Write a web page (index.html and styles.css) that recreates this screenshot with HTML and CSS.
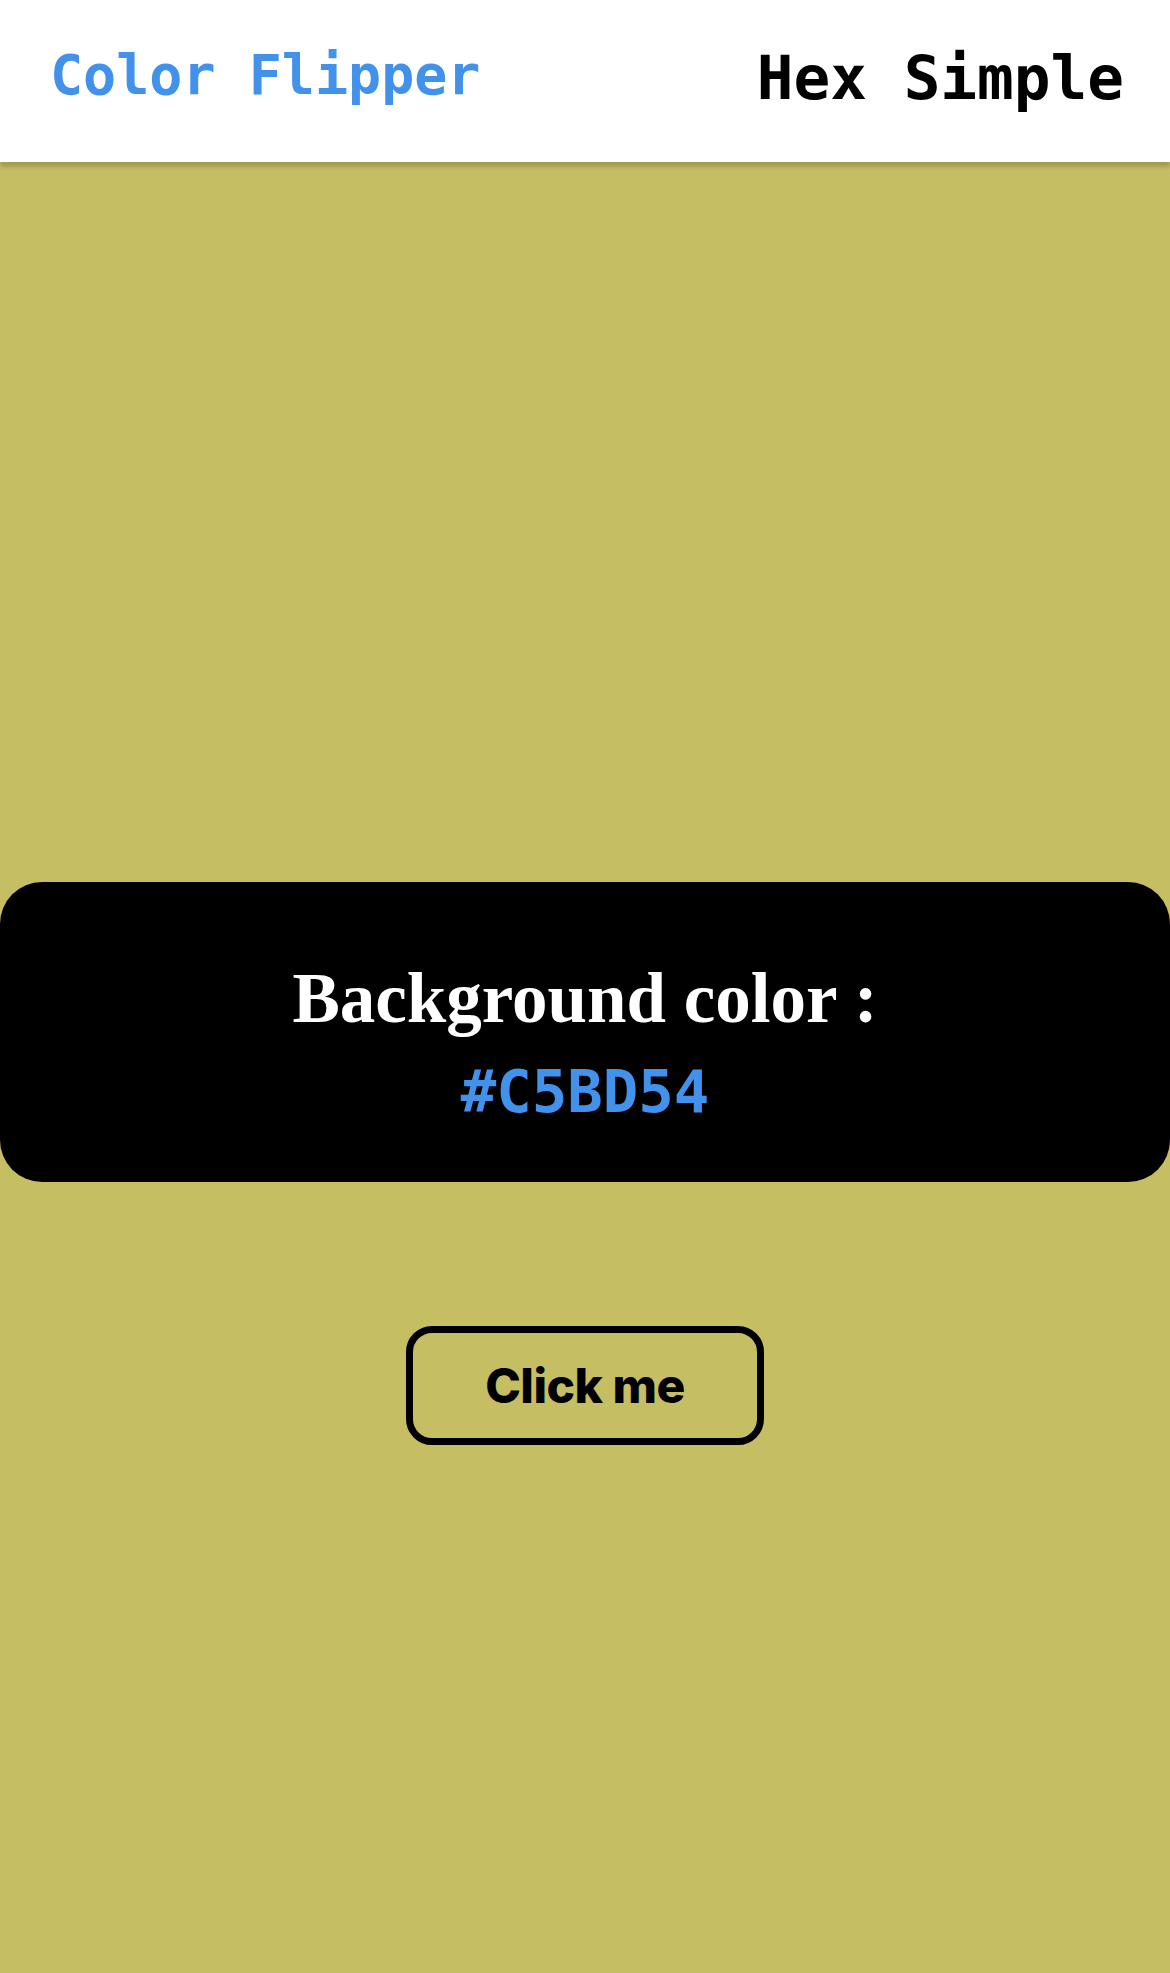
FILE: index.html
```html
<!DOCTYPE html>
<html lang="en">
<head>
<meta charset="utf-8">
<title>Color Flipper</title>
<link rel="stylesheet" href="styles.css">
</head>
<body>
<header class="topbar">
  <div class="logo">Color Flipper</div>
  <nav class="nav"><span class="nav-link">Hex</span> <span class="nav-link">Simple</span></nav>
</header>
<main class="stage">
  <section class="card">
    <h2 class="card-title">Background color :</h2>
    <div class="card-hex">#C5BD54</div>
  </section>
  <button class="flip-btn">Click me</button>
</main>
</body>
</html>
```
FILE: styles.css
```css
* { box-sizing: border-box; }
html, body { margin: 0; padding: 0; }
body {
  background: #C5BE62;
  min-height: 1973px;
  font-family: "DejaVu Sans Mono", monospace;
}
.topbar {
  position: relative;
  z-index: 1;
  height: 162px;
  background: #ffffff;
  display: flex;
  justify-content: space-between;
  align-items: flex-start;
  padding: 42px 46px 0 50px;
  box-shadow: 0 5px 4px rgba(0, 0, 0, 0.18);
}
.logo {
  font-family: "DejaVu Sans Mono", monospace;
  font-weight: bold;
  font-size: 55px;
  color: #4292ec;
  margin-top: 1px;
  white-space: pre;
}
.nav {
  font-family: "DejaVu Sans Mono", monospace;
  font-weight: bold;
  font-size: 61px;
  color: #000;
  white-space: pre;
}
.stage {
  display: flex;
  flex-direction: column;
  align-items: center;
  padding-top: 720px;
}
.card {
  width: 100%;
  background: #000;
  border-radius: 42px;
  height: 300px;
  padding: 76px 0 0;
  display: flex;
  flex-direction: column;
  align-items: center;
  gap: 19px;
}
.card-title {
  margin: 0;
  font-family: "Liberation Serif", "Times New Roman", serif;
  font-weight: bold;
  font-size: 71px;
  line-height: 80px;
  color: #fff;
}
.card-hex {
  font-family: "DejaVu Sans Mono", monospace;
  font-weight: bold;
  font-size: 59px;
  line-height: 70px;
  color: #4292ec;
}
.flip-btn {
  margin-top: 144px;
  width: 358px;
  height: 119px;
  background: transparent;
  border: 7px solid #000;
  border-radius: 26px;
  font-family: Inter, "Liberation Sans", sans-serif;
  font-weight: 800;
  font-size: 48px;
  color: #000;
  letter-spacing: -0.5px;
  cursor: pointer;
}
```
